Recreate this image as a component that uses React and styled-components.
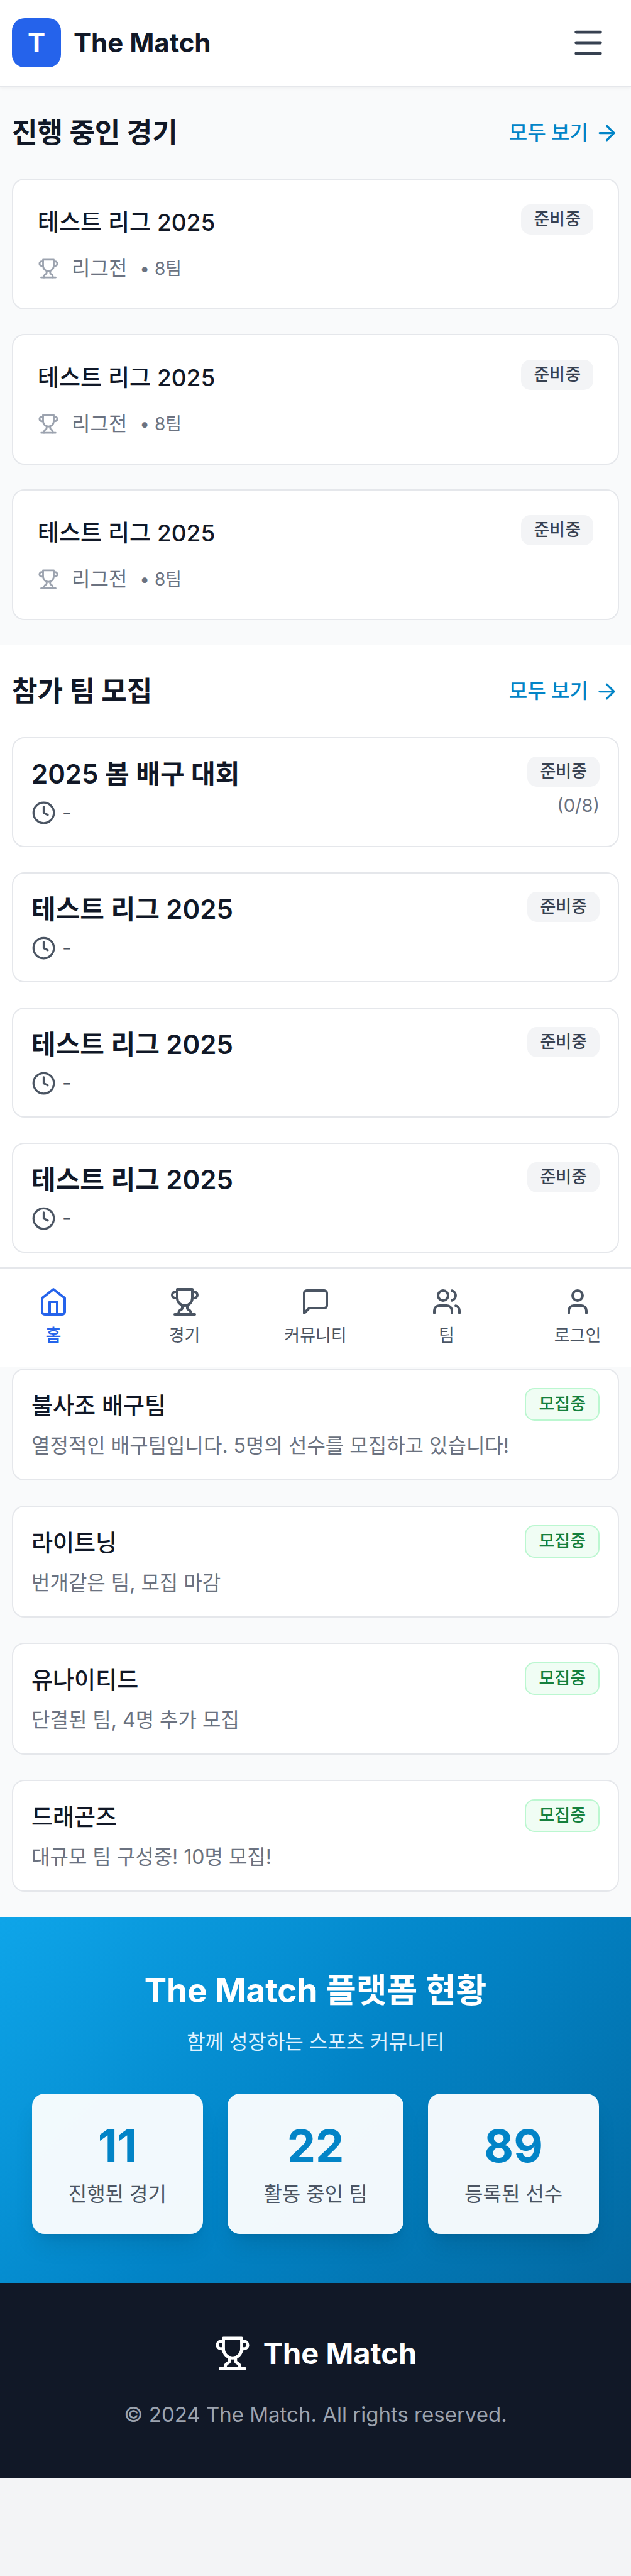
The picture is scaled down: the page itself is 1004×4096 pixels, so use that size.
import React from "react";
import styled, { createGlobalStyle, css } from "styled-components";
import { ArrowRight, Clock, Menu, User, Users } from "lucide-react";

const color = {
  ink: "#111827",
  text: "#374151",
  soft: "#4b5563",
  muted: "#6b7280",
  faint: "#9ca3af",
  line: "#e5e7eb",
  chip: "#f3f4f6",
  page: "#f9fafb",
  blue: "#2563eb",
  sky: "#0284c7",
};

const GlobalStyle = createGlobalStyle`
  *, *::before, *::after { box-sizing: border-box; }
  body {
    margin: 0;
    background: ${color.chip};
    color: ${color.ink};
    font-family: Inter, "Noto Sans CJK KR", sans-serif;
    font-size: 32px;
    line-height: 48px;
  }
  h1, h2, h3, p, ul { margin: 0; padding: 0; }
  ul { list-style: none; }
  a { color: inherit; text-decoration: none; }
  svg { display: block; flex: none; }
`;

const Header = styled.header`
  position: relative;
  display: flex;
  align-items: center;
  justify-content: space-between;
  height: 138px;
  padding: 0 19px;
  background: #fff;
  border-bottom: 2px solid ${color.line};
  box-shadow: 0 2px 5px rgba(0, 0, 0, 0.05);
`;

const Brand = styled.a`
  display: flex;
  align-items: center;
  gap: 20px;
  font-size: 42px;
  font-weight: 700;
`;

const Logo = styled.span`
  display: grid;
  place-items: center;
  width: 78px;
  height: 78px;
  border-radius: 20px;
  background: ${color.blue};
  color: #fff;
`;

const MenuButton = styled.button`
  padding: 20px;
  border: 0;
  background: none;
  color: ${color.text};
`;

const Section = styled.section`
  padding: 39px 19px 40px;
  background: ${(p) => (p.$white ? "#fff" : color.page)};
  ${(p) => p.$beforeNav && css`padding-bottom: 23px;`}
  ${(p) => p.$afterNav && css`padding-top: 3px;`}
`;

const SectionHead = styled.div`
  display: flex;
  align-items: center;
  justify-content: space-between;
  height: 68px;
  margin-bottom: 39px;
`;

const SectionTitle = styled.h2`
  font-size: 44px;
  font-weight: 700;
`;

const MoreLink = styled.a`
  display: flex;
  align-items: center;
  gap: 10px;
  color: ${color.sky};
  font-weight: 500;
`;

const CardList = styled.ul`
  display: flex;
  flex-direction: column;
  gap: ${(p) => p.$gap}px;
`;

const Card = styled.li`
  display: flex;
  align-items: flex-start;
  justify-content: space-between;
  padding: ${(p) => (p.$roomy ? 39 : 29)}px;
  border: 2px solid ${color.line};
  border-radius: 20px;
  background: #fff;
`;

const CardTitle = styled.h3`
  font-size: 37px;
  font-weight: 500;
  line-height: 58px;
`;

const EventTitle = styled.h3`
  font-size: 42px;
  font-weight: 600;
  line-height: 55px;
`;

const Meta = styled.div`
  display: flex;
  align-items: center;
  gap: 20px;
  height: 48px;
  margin-top: 20px;
  color: ${color.muted};

  svg { color: ${color.faint}; }
`;

const Small = styled.span`
  font-size: 28px;
`;

const When = styled.div`
  display: flex;
  align-items: center;
  gap: 10px;
  height: 48px;
  margin-top: 10px;
  color: ${color.soft};
`;

const Description = styled.p`
  margin-top: 10px;
  color: ${color.muted};
`;

const Side = styled.div`
  display: flex;
  flex-direction: column;
  align-items: flex-end;
  gap: 10px;
  color: ${color.muted};
  font-size: 29px;
  line-height: 39px;
`;

const Badge = styled.span`
  padding: 5px 20px;
  border-radius: 15px;
  background: ${color.chip};
  color: ${color.text};
  font-size: 27px;
  font-weight: 500;
  line-height: 38px;
  white-space: nowrap;

  ${(p) =>
    p.$open &&
    css`
      border: 2px solid #bbf7d0;
      background: #f0fdf4;
      color: #15803d;
    `}
`;

const TabBar = styled.nav`
  display: flex;
  justify-content: space-between;
  padding: 29px 20px 30px;
  border-top: 2px solid ${color.line};
  background: #fff;
`;

const Tab = styled.a`
  display: flex;
  flex-direction: column;
  align-items: center;
  gap: 10px;
  min-width: 130px;
  color: ${(p) => (p.$active ? color.blue : color.soft)};
  font-size: 27px;
  font-weight: ${(p) => (p.$active ? 500 : 400)};
  line-height: 39px;
`;

const Stats = styled.section`
  padding: 78px 51px;
  background: linear-gradient(135deg, #0ea5e9 0%, #0284c7 50%, #0369a1 100%);
  color: #fff;
  text-align: center;
`;

const StatsTitle = styled.h2`
  font-size: 53px;
  font-weight: 700;
  line-height: 78px;
`;

const StatsLead = styled.p`
  margin: 19px 0 58px;
  color: #e0f2fe;
`;

const StatRow = styled.ul`
  display: flex;
  gap: 39px;
`;

const Stat = styled.li`
  flex: 1 1 auto;
  padding: 39px;
  border-radius: 20px;
  background: rgba(255, 255, 255, 0.95);
  box-shadow: 0 24px 36px -7px rgba(0, 0, 0, 0.1), 0 10px 15px -10px rgba(0, 0, 0, 0.1);
  color: ${color.soft};
`;

const StatValue = styled.strong`
  display: block;
  margin-bottom: 10px;
  color: ${color.sky};
  font-size: 72px;
  font-weight: 700;
  line-height: 87px;
`;

const Footer = styled.footer`
  display: flex;
  flex-direction: column;
  align-items: center;
  gap: 39px;
  padding: 78px 20px 77px;
  background: ${color.ink};
  color: ${color.faint};
  font-size: 33px;
`;

const FooterBrand = styled.div`
  display: flex;
  align-items: center;
  gap: 20px;
  height: 68px;
  color: #fff;
  font-size: 47px;
  font-weight: 700;
`;

const LineIcon = ({ size = 48, children }) => (
  <svg
    width={size}
    height={size}
    viewBox="0 0 24 24"
    fill="none"
    stroke="currentColor"
    strokeWidth="2"
    strokeLinecap="round"
    strokeLinejoin="round"
    aria-hidden="true"
  >
    {children}
  </svg>
);

const HomeIcon = () => (
  <LineIcon>
    <path d="M3 9l9-7 9 7v11a2 2 0 0 1-2 2H5a2 2 0 0 1-2-2z" />
    <path d="M9 22V12h6v10" />
  </LineIcon>
);

const TrophyIcon = ({ size }) => (
  <LineIcon size={size}>
    <path d="M6 9H4.5a2.5 2.5 0 0 1 0-5H6" />
    <path d="M18 9h1.5a2.5 2.5 0 0 0 0-5H18" />
    <path d="M4 22h16" />
    <path d="M10 14.66V17c0 .55-.47.98-.97 1.21C7.85 18.75 7 20.24 7 22" />
    <path d="M14 14.66V17c0 .55.47.98.97 1.21C16.15 18.75 17 20.24 17 22" />
    <path d="M18 2H6v7a6 6 0 0 0 12 0V2Z" />
  </LineIcon>
);

const SpeechIcon = () => (
  <LineIcon>
    <path d="M21 15a2 2 0 0 1-2 2H7l-4 4V5a2 2 0 0 1 2-2h14a2 2 0 0 1 2 2z" />
  </LineIcon>
);

const matches = [1, 2, 3].map((id) => ({ id, name: "테스트 리그 2025", type: "리그전", teams: 8 }));

const events = [
  { id: 1, name: "2025 봄 배구 대회", count: "(0/8)" },
  { id: 2, name: "테스트 리그 2025" },
  { id: 3, name: "테스트 리그 2025" },
  { id: 4, name: "테스트 리그 2025" },
];

const teams = [
  { name: "불사조 배구팀", text: "열정적인 배구팀입니다. 5명의 선수를 모집하고 있습니다!" },
  { name: "라이트닝", text: "번개같은 팀, 모집 마감" },
  { name: "유나이티드", text: "단결된 팀, 4명 추가 모집" },
  { name: "드래곤즈", text: "대규모 팀 구성중! 10명 모집!" },
];

const tabs = [
  { label: "홈", icon: <HomeIcon />, active: true },
  { label: "경기", icon: <TrophyIcon size={48} /> },
  { label: "커뮤니티", icon: <SpeechIcon /> },
  { label: "팀", icon: <Users size={48} /> },
  { label: "로그인", icon: <User size={48} /> },
];

const stats = [
  { value: 11, label: "진행된 경기" },
  { value: 22, label: "활동 중인 팀" },
  { value: 89, label: "등록된 선수" },
];

function SectionHeading({ title }) {
  return (
    <SectionHead>
      <SectionTitle>{title}</SectionTitle>
      <MoreLink href="#">
        모두 보기
        <ArrowRight size={39} />
      </MoreLink>
    </SectionHead>
  );
}

export default function App() {
  return (
    <>
      <GlobalStyle />
      <Header>
        <Brand href="#">
          <Logo>T</Logo>
          The Match
        </Brand>
        <MenuButton type="button" aria-label="메뉴">
          <Menu size={58} />
        </MenuButton>
      </Header>
      <main>
        <Section>
          <SectionHeading title="진행 중인 경기" />
          <CardList $gap={39}>
            {matches.map((m) => (
              <Card key={m.id} $roomy>
                <div>
                  <CardTitle>{m.name}</CardTitle>
                  <Meta>
                    <TrophyIcon size={34} />
                    <span>{m.type}</span>
                    <Small>• {m.teams}팀</Small>
                  </Meta>
                </div>
                <Badge>준비중</Badge>
              </Card>
            ))}
          </CardList>
        </Section>
        <Section $white $beforeNav>
          <SectionHeading title="참가 팀 모집" />
          <CardList $gap={40}>
            {events.map((e) => (
              <Card key={e.id}>
                <div>
                  <EventTitle>{e.name}</EventTitle>
                  <When>
                    <Clock size={39} />
                    <span>-</span>
                  </When>
                </div>
                <Side>
                  <Badge>준비중</Badge>
                  {e.count && <span>{e.count}</span>}
                </Side>
              </Card>
            ))}
          </CardList>
        </Section>
        <TabBar>
          {tabs.map((t) => (
            <Tab key={t.label} href="#" $active={t.active}>
              {t.icon}
              {t.label}
            </Tab>
          ))}
        </TabBar>
        <Section $afterNav>
          <CardList $gap={40}>
            {teams.map((t) => (
              <Card key={t.name}>
                <div>
                  <CardTitle>{t.name}</CardTitle>
                  <Description>{t.text}</Description>
                </div>
                <Badge $open>모집중</Badge>
              </Card>
            ))}
          </CardList>
        </Section>
        <Stats>
          <StatsTitle>The Match 플랫폼 현황</StatsTitle>
          <StatsLead>함께 성장하는 스포츠 커뮤니티</StatsLead>
          <StatRow>
            {stats.map((s) => (
              <Stat key={s.label}>
                <StatValue>{s.value}</StatValue>
                {s.label}
              </Stat>
            ))}
          </StatRow>
        </Stats>
      </main>
      <Footer>
        <FooterBrand>
          <TrophyIcon size={58} />
          The Match
        </FooterBrand>
        <p>© 2024 The Match. All rights reserved.</p>
      </Footer>
    </>
  );
}
